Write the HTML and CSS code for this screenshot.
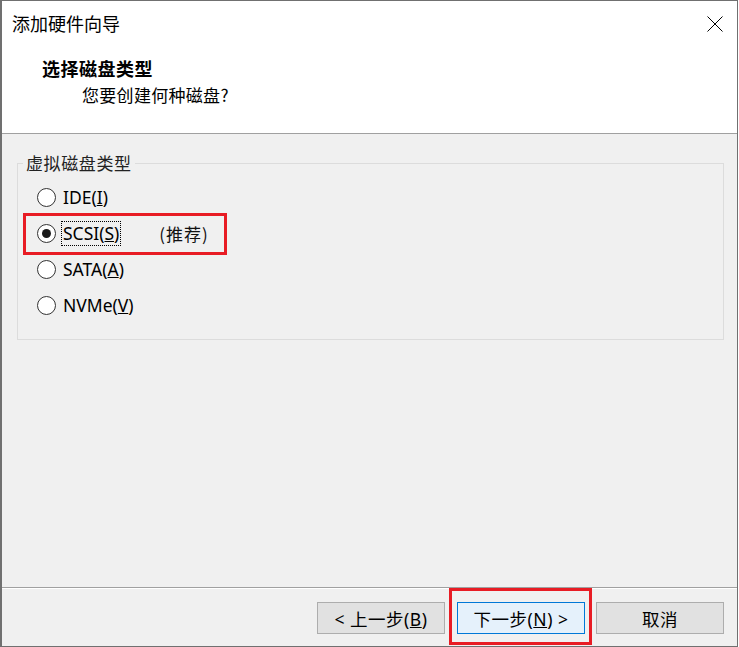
FILE: index.html
```html
<!DOCTYPE html>
<html lang="zh-CN">
<head>
    <meta charset="UTF-8">
    <title>添加硬件向导</title>
    <link rel="stylesheet" href="styles.css">
</head>
<body>

<div class="wizard">
    <div class="wizard-header">
        <div class="titlebar">
            <span class="title">添加硬件向导</span>
            <svg class="close-icon" width="16" height="16" viewBox="0 0 16 16">
                <path d="M0.5 0.5 L15.5 15.5 M15.5 0.5 L0.5 15.5" stroke="#000" stroke-width="1" fill="none"/>
            </svg>
        </div>
        <div class="step-heading">
            <h1>选择磁盘类型</h1>
            <p>您要创建何种磁盘?</p>
        </div>
    </div>

    <div class="wizard-body">
        <fieldset class="group-box">
            <legend>虚拟磁盘类型</legend>
            <label class="radio-row">
                <span class="radio"></span>
                <span class="radio-text">IDE(<u>I</u>)</span>
            </label>
            <label class="radio-row highlighted">
                <span class="radio checked"></span>
                <span class="radio-text focused">SCSI(<u>S</u>)</span>
                <span class="hint">(推荐)</span>
            </label>
            <label class="radio-row">
                <span class="radio"></span>
                <span class="radio-text">SATA(<u>A</u>)</span>
            </label>
            <label class="radio-row">
                <span class="radio"></span>
                <span class="radio-text">NVMe(<u>V</u>)</span>
            </label>
        </fieldset>
    </div>

    <div class="wizard-footer">
        <button class="btn">&lt; 上一步(<u>B</u>)</button>
        <button class="btn btn-default highlighted-btn">下一步(<u>N</u>) &gt;</button>
        <button class="btn btn-cancel">取消</button>
    </div>
</div>

</body>
</html>
```

FILE: styles.css
```css
body {
    margin: 0;
    background: #fff;
    font-family: 'Noto Sans', 'Noto Sans CJK SC', sans-serif;
    color: #000;
}

.wizard {
    width: 738px;
    height: 647px;
    box-sizing: border-box;
    border: 1px solid #707070;
    border-left-width: 2px;
    background: #f0f0f0;
    display: flex;
    flex-direction: column;
}

.wizard-header {
    height: 133px;
    box-sizing: border-box;
    background: #fff;
    border-bottom: 1px solid #a0a0a0;
}

.titlebar {
    height: 44px;
    display: flex;
    align-items: center;
    justify-content: space-between;
    padding: 0 14px 0 10px;
}

.title {
    font-size: 18px;
    font-family: 'Noto Sans CJK SC', sans-serif;
}

.close-icon {
    display: block;
    margin-top: 1px;
}

.step-heading {
    padding: 10px 0 0 40px;
}

.step-heading h1 {
    margin: 0;
    font-size: 18px;
    font-weight: bold;
    line-height: 26px;
    letter-spacing: 0.5px;
    font-family: 'Noto Sans CJK SC', sans-serif;
}

.step-heading p {
    margin: 1px 0 0 40px;
    font-size: 17px;
    line-height: 26px;
    letter-spacing: 0.3px;
    font-family: 'Noto Sans CJK SC', sans-serif;
}

.wizard-body {
    flex: 1;
    padding: 20px 13px 0 15px;
}

.group-box {
    margin: 0;
    height: 186px;
    box-sizing: border-box;
    border: 1px solid #dcdcdc;
    padding: 7px 0 0 19px;
}

.group-box legend {
    margin-left: -14px;
    padding: 0 3px;
    font-size: 17px;
    line-height: 18px;
    letter-spacing: 0.6px;
    color: #222;
    font-family: 'Noto Sans CJK SC', sans-serif;
}

.radio-row {
    position: relative;
    display: flex;
    align-items: center;
    height: 36px;
    font-size: 17.5px;
}

.radio {
    width: 17px;
    height: 17px;
    border: 1px solid #333;
    border-radius: 50%;
    background: #fff;
    display: flex;
    align-items: center;
    justify-content: center;
    margin-right: 5px;
}

.radio.checked::after {
    content: '';
    width: 9px;
    height: 9px;
    border-radius: 50%;
    background: #1a1a1a;
}

.radio-text {
    line-height: 23px;
    padding: 0 1px;
    border: 1px dotted transparent;
}

.radio-text.focused {
    border-color: #000;
}

.hint {
    margin-left: 38px;
    font-family: 'Noto Sans CJK SC', sans-serif;
    font-size: 17px;
    letter-spacing: 1px;
    color: #111;
}

.highlighted::after {
    content: '';
    position: absolute;
    left: -14px;
    top: -2px;
    width: 198px;
    height: 36px;
    border: 3px solid #e81c24;
}

.wizard-footer {
    height: 59px;
    box-sizing: border-box;
    border-top: 1px solid #a0a0a0;
    box-shadow: inset 0 1px #fff;
    display: flex;
    justify-content: flex-end;
    align-items: flex-start;
    gap: 12px;
    padding: 14px 13px 0 0;
}

.btn {
    position: relative;
    width: 128px;
    height: 32px;
    border: 1px solid #adadad;
    background: #e1e1e1;
    font-family: 'Noto Sans', 'Noto Sans CJK SC', sans-serif;
    font-size: 17.5px;
    letter-spacing: 0.5px;
    color: #000;
    padding: 0;
}

.btn-default {
    background: #e5f1fb;
    border-color: #0078d7;
}

.btn-cancel {
    margin-left: -1px;
}

.highlighted-btn::after {
    content: '';
    position: absolute;
    left: -9px;
    top: -15px;
    width: 137px;
    height: 51px;
    border: 3px solid #e81c24;
}
```
